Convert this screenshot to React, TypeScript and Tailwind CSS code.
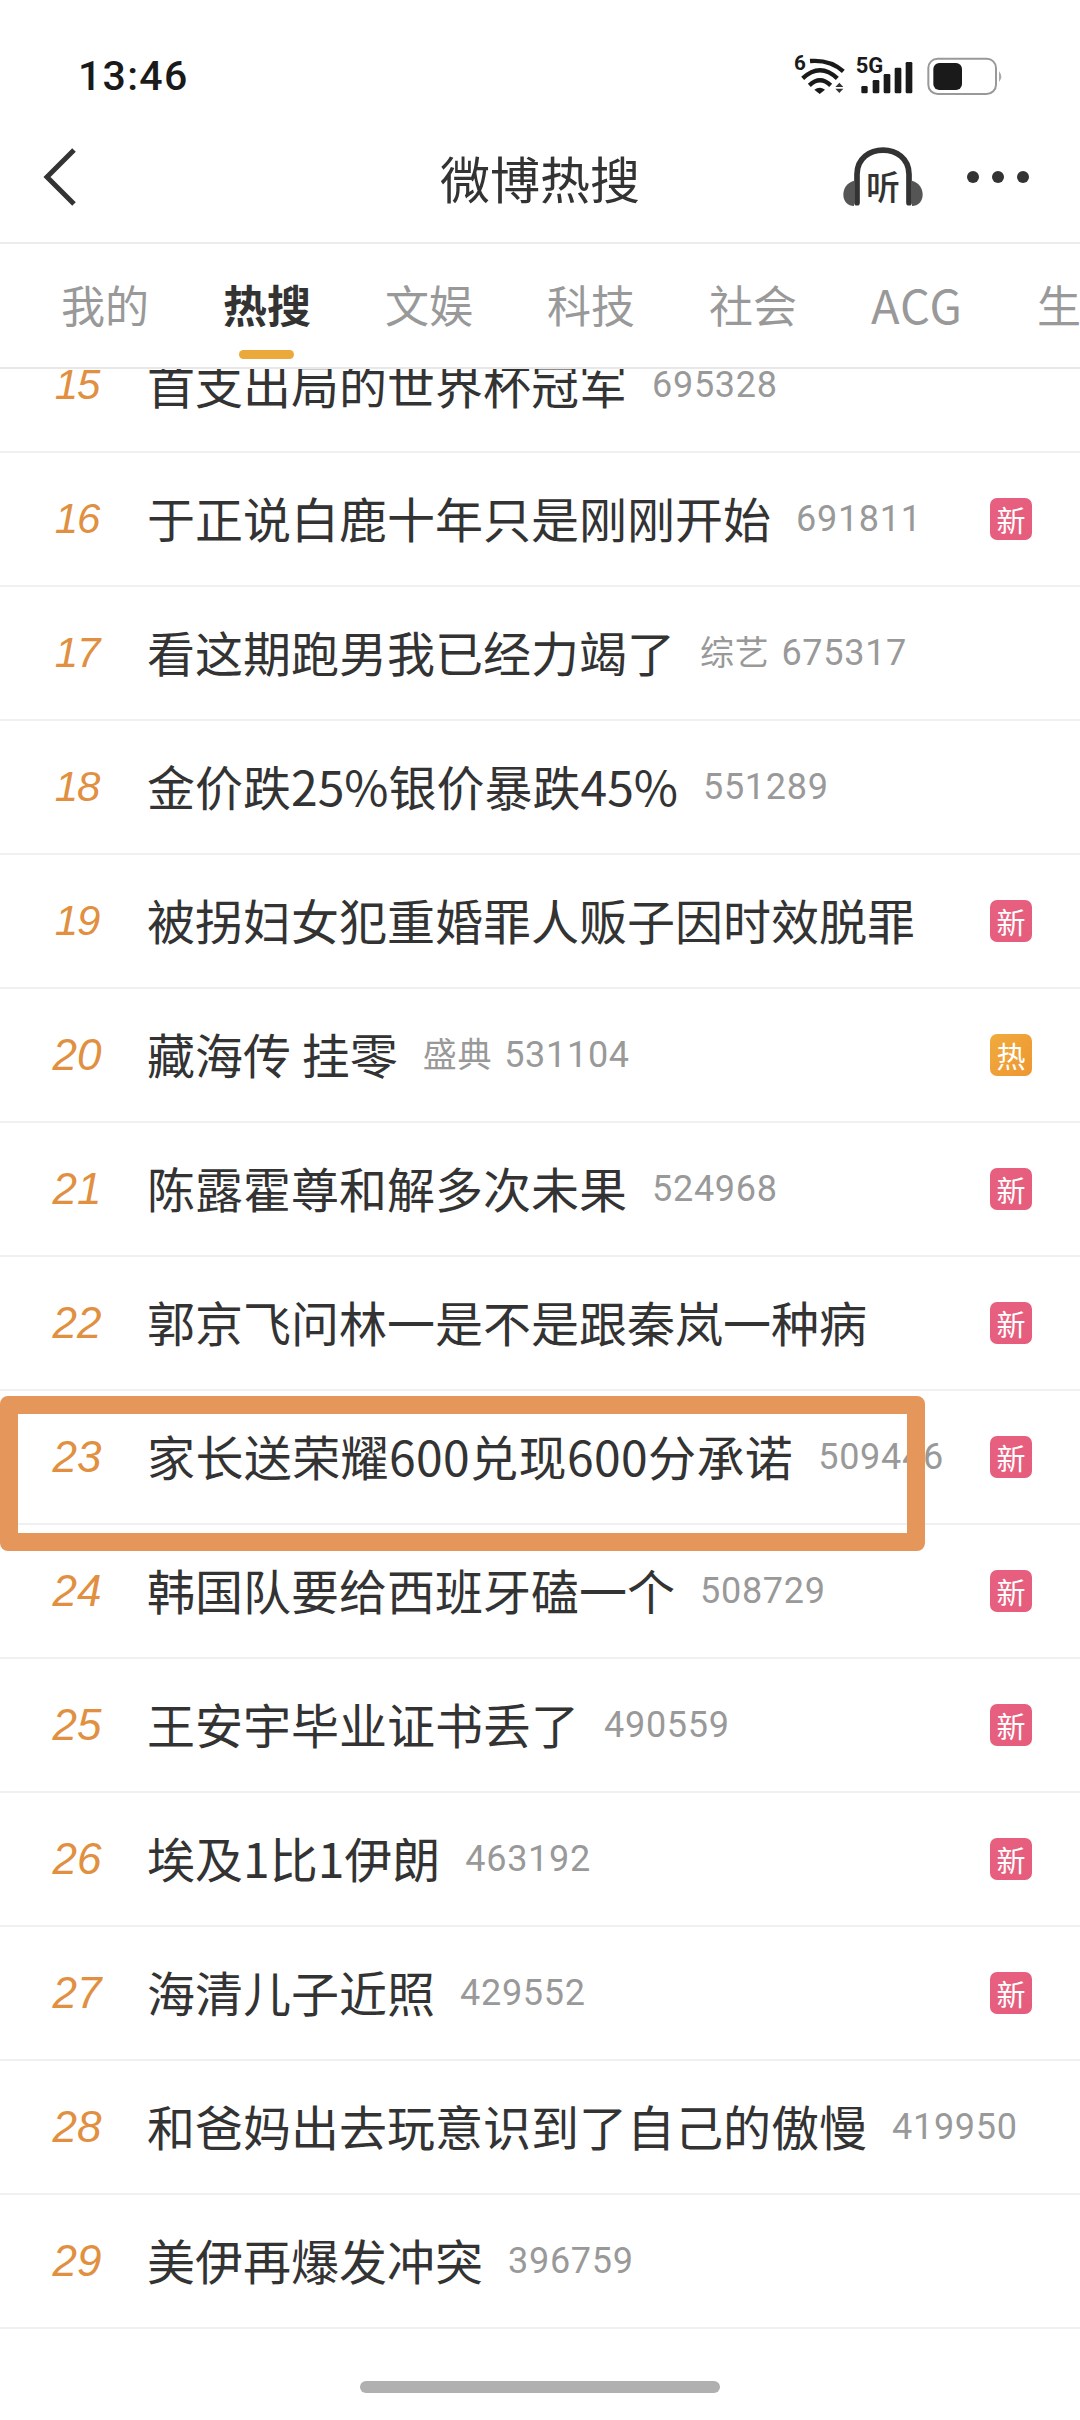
import React from "react";

const CJK = '"Noto Sans CJK SC", sans-serif';
const NUM = 'Roboto, "Noto Sans CJK SC", sans-serif';

type Row = { rank: number; title: string; tag?: string; count: string; badge?: "新" | "热"; wide?: boolean };

const rows: Row[] = [
  { rank: 15, title: "首支出局的世界杯冠军", count: "695328" },
  { rank: 16, title: "于正说白鹿十年只是刚刚开始", count: "691811", badge: "新" },
  { rank: 17, title: "看这期跑男我已经力竭了", tag: "综艺", count: "675317" },
  { rank: 18, title: "金价跌25%银价暴跌45%", count: "551289" },
  { rank: 19, title: "被拐妇女犯重婚罪人贩子因时效脱罪", count: "", badge: "新" },
  { rank: 20, title: "藏海传 挂零", tag: "盛典", count: "531104", badge: "热" },
  { rank: 21, title: "陈露霍尊和解多次未果", count: "524968", badge: "新" },
  { rank: 22, title: "郭京飞问林一是不是跟秦岚一种病", count: "", badge: "新" },
  { rank: 23, title: "家长送荣耀600兑现600分承诺", count: "509446", badge: "新", wide: true },
  { rank: 24, title: "韩国队要给西班牙磕一个", count: "508729", badge: "新" },
  { rank: 25, title: "王安宇毕业证书丢了", count: "490559", badge: "新" },
  { rank: 26, title: "埃及1比1伊朗", count: "463192", badge: "新" },
  { rank: 27, title: "海清儿子近照", count: "429552", badge: "新" },
  { rank: 28, title: "和爸妈出去玩意识到了自己的傲慢", count: "419950" },
  { rank: 29, title: "美伊再爆发冲突", count: "396759" },
];

const tabs = ["我的", "热搜", "文娱", "科技", "社会", "ACG", "生"];

function StatusIcons() {
  return (
    <svg width="220" height="50" viewBox="90 60 660 150" className="block">
      <text x="102" y="120" fontSize="62" fontWeight="700" fill="#1a1a1a" style={{ fontFamily: "Roboto, sans-serif" }}>6</text>
      <g fill="none" stroke="#1a1a1a" strokeWidth="13">
        <path d="M150 93 Q210 88 250 124" />
        <path d="M128 145 Q180 96 232 145" />
        <path d="M148 166 Q180 136 212 166" />
      </g>
      <path d="M163 179 Q179 168 195 179 L179 192 Z" fill="#1a1a1a" />
      <path d="M238 158 L250 171 L226 171 Z M226 176 L250 176 L238 189 Z" fill="#333" />
      <text x="287" y="128" fontSize="66" fontWeight="700" fill="#1a1a1a" style={{ fontFamily: "Roboto, sans-serif" }}>5G</text>
      <g fill="#1a1a1a">
        <rect x="304" y="168" width="19" height="22" rx="4" />
        <rect x="338" y="150" width="20" height="40" rx="4" />
        <rect x="371" y="132" width="20" height="58" rx="4" />
        <rect x="404" y="113" width="20" height="77" rx="4" />
        <rect x="437" y="96" width="20" height="94" rx="4" />
      </g>
      <rect x="505" y="86" width="203" height="106" rx="28" fill="none" stroke="#999" strokeWidth="6" />
      <rect x="520" y="99" width="86" height="81" rx="18" fill="#1a1a1a" />
      <path d="M717 124 Q731 140 717 156 Z" fill="#aaa" />
    </svg>
  );
}

function ListenIcon() {
  return (
    <div className="relative h-[60px] w-[80px]">
      <svg width="80" height="60" viewBox="255 343 240 180" className="block">
        <path d="M288 444 C266 450 256 468 256 486 C256 506 270 520 288 520 Z" fill="#555" />
        <path d="M462 444 C484 450 494 468 494 486 C494 506 480 520 462 520 Z" fill="#555" />
        <path d="M297 510 L297 425 C297 328 453 328 453 425 L453 510" fill="none" stroke="#333" strokeWidth="17" strokeLinecap="round" />
      </svg>
      <span className="absolute left-[23px] top-[22px] text-[34px] font-medium leading-none text-[#333]">听</span>
    </div>
  );
}

function Badge({ kind }: { kind: "新" | "热" }) {
  const cls =
    kind === "新"
      ? "bg-gradient-to-br from-[#e8607f] to-[#e55c7c]"
      : "bg-gradient-to-tl from-[#ee9632] to-[#f0ab3c]";
  return (
    <span
      className={`ml-auto mr-[48px] flex h-[42px] w-[42px] shrink-0 items-center justify-center rounded-[7px] text-[29px] leading-none text-white ${cls}`}
      style={{ fontFamily: CJK }}
    >
      {kind}
    </span>
  );
}

export default function App() {
  return (
    <div className="relative flex h-[2420px] w-[1080px] flex-col overflow-hidden bg-white" style={{ fontFamily: CJK }}>
      {/* status bar */}
      <div className="flex h-[100px] shrink-0 items-start justify-between pl-[78px] pr-[70px]">
        <span className="mt-[52px] text-[41px] font-medium leading-[48px] tracking-[1.3px] text-[#1a1a1a]" style={{ fontFamily: NUM }}>
          13:46
        </span>
        <div className="mt-[50px]">
          <StatusIcons />
        </div>
      </div>

      {/* title bar */}
      <div className="grid h-[144px] shrink-0 grid-cols-[1fr_auto_1fr] items-center border-b-2 border-[#ececec] pt-[11px]">
        <div className="pl-[43px]">
          <svg width="34" height="58" viewBox="0 0 34 58" className="block">
            <path d="M31 2 L4 29 L31 56" fill="none" stroke="#333" strokeWidth="5" />
          </svg>
        </div>
        <h1 className="text-[50px] font-normal leading-none text-[#333]">微博热搜</h1>
        <div className="flex items-center justify-end pr-[51px]">
          <ListenIcon />
          <div className="ml-[44px] flex gap-[13px]">
            <span className="h-[12px] w-[12px] rounded-full bg-[#333]" />
            <span className="h-[12px] w-[12px] rounded-full bg-[#333]" />
            <span className="h-[12px] w-[12px] rounded-full bg-[#333]" />
          </div>
        </div>
      </div>

      {/* tabs */}
      <div className="flex h-[125px] shrink-0 items-start gap-[74px] overflow-hidden border-b-2 border-[#e8e8e8] pl-[61px] pt-[29px]">
        {tabs.map((t) => (
          <div key={t} className="relative shrink-0">
            <span
              className={`block leading-[62px] ${t === "热搜" ? "font-bold text-[#333]" : "text-[#999]"} ${t === "ACG" ? "text-[47px] tracking-[1px]" : "text-[44px]"}`}
            >
              {t}
            </span>
            {t === "热搜" && (
              <span className="absolute left-[16px] top-[77px] h-[9px] w-[55px] rounded-full bg-[#eba93c]" />
            )}
          </div>
        ))}
      </div>

      {/* list */}
      <div className="h-[1960px] shrink-0 overflow-hidden">
        <div className="-mt-[50px]">
          {rows.map((r) => (
            <div key={r.rank} className="flex h-[134px] items-center border-b-2 border-[#f0f0f0]">
              <span
                className={`ml-[22px] mr-[15px] w-[110px] shrink-0 text-center italic leading-none text-[#e09040] ${
                  r.rank < 20 ? "text-[42px] tracking-[-1px]" : "text-[44px]"
                }`}
                style={{ fontFamily: '"Liberation Sans", sans-serif' }}
              >
                {r.rank}
              </span>
              <span className={`whitespace-pre pb-[4px] text-[48px] leading-none text-[#333] ${r.wide ? "tracking-[0.4px]" : ""}`}>
                {r.title}
              </span>
              {(r.tag || r.count) && (
                <span className="ml-[25px] whitespace-nowrap text-[36px] leading-none tracking-[0.7px] text-[#999]" style={{ fontFamily: NUM }}>
                  {r.tag && <span className="mr-[12px] text-[34px]">{r.tag}</span>}
                  {r.count}
                </span>
              )}
              {r.badge && <Badge kind={r.badge} />}
            </div>
          ))}
        </div>
      </div>

      {/* home indicator */}
      <div className="flex flex-1 justify-center pt-[52px]">
        <span className="h-[12px] w-[360px] rounded-full bg-[#b0b0b0]" />
      </div>

      {/* annotation rectangle */}
      <div className="absolute left-0 top-[1396px] h-[155px] w-[925px] rounded-[8px] border-[18px] border-[#e5965a]" />
    </div>
  );
}
